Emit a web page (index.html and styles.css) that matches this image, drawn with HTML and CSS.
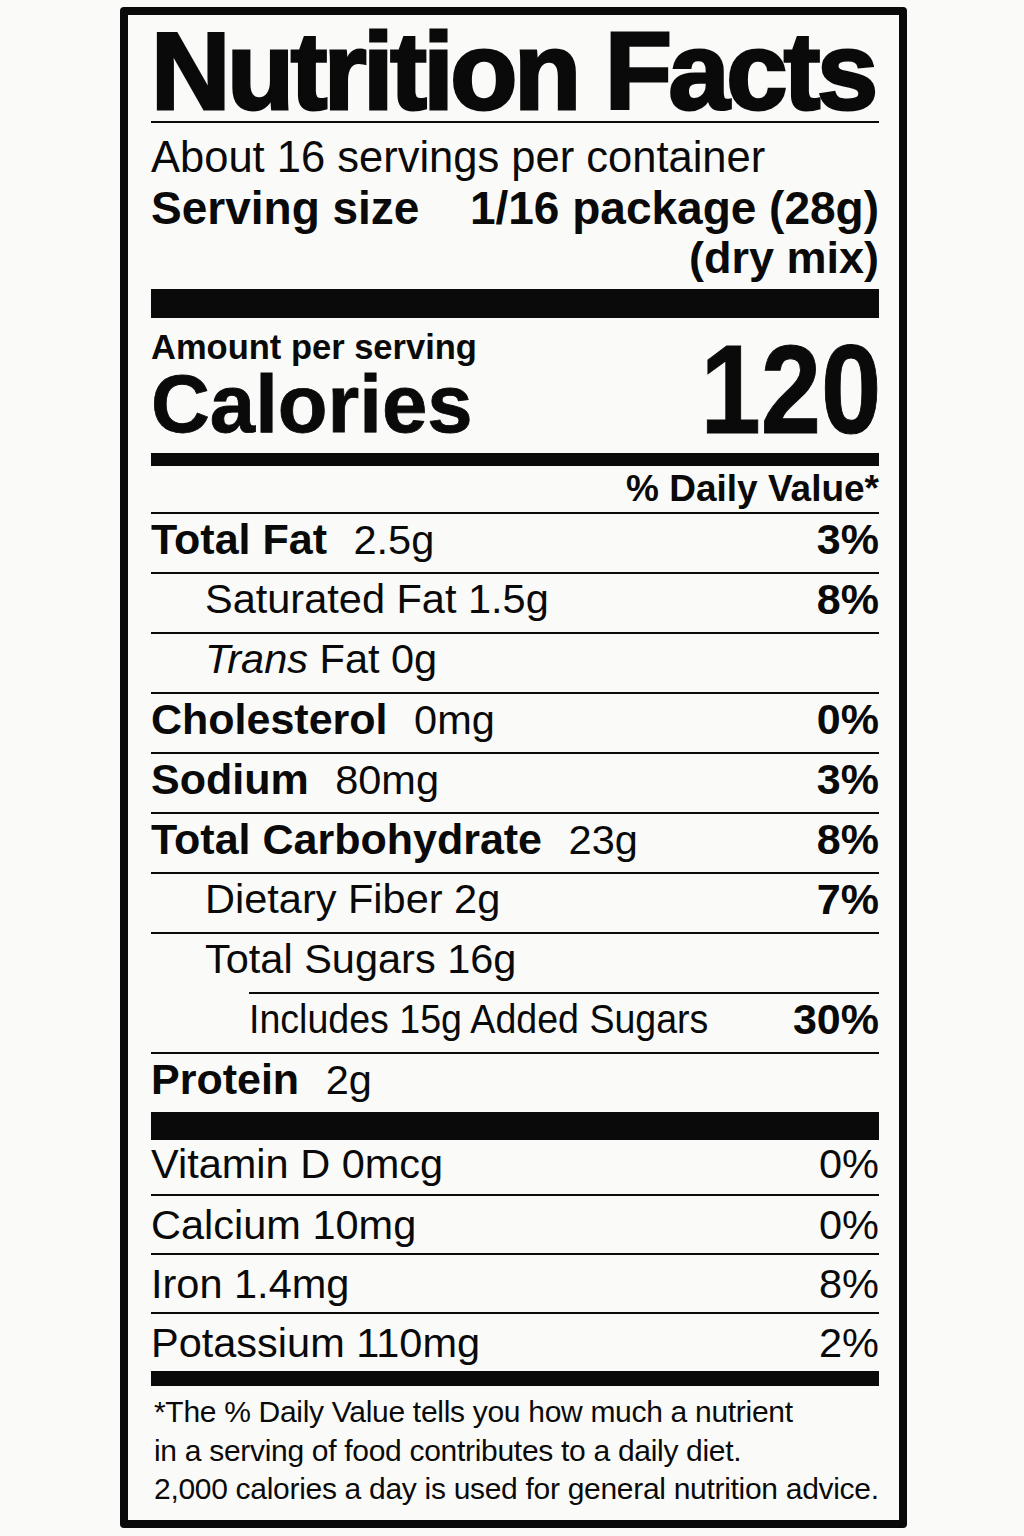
FILE: index.html
```html
<!DOCTYPE html>
<html lang="en">
<head>
<meta charset="utf-8">
<title>Nutrition Facts</title>
<link rel="stylesheet" href="styles.css">
</head>
<body>
<div class="label">
  <h1 class="title">Nutrition Facts</h1>

  <div class="servings">
    <div class="per-container">About 16 servings per container</div>
    <div class="size-row">
      <span>Serving size</span>
      <span>1/16 package (28g)</span>
    </div>
    <div class="size-note">(dry mix)</div>
  </div>

  <div class="calories">
    <div class="cal-left">
      <div class="amount">Amount per serving</div>
      <div class="cal-word">Calories</div>
    </div>
    <div class="cal-num"><span>120</span></div>
  </div>

  <div class="dv-head">% Daily Value*</div>

  <div class="rows">
    <div class="row"><span><b>Total Fat</b> <span class="amt">2.5g</span></span><b>3%</b></div>
    <div class="row indent"><span>Saturated Fat 1.5g</span><b>8%</b></div>
    <div class="row indent"><span><i>Trans</i> Fat 0g</span></div>
    <div class="row"><span><b>Cholesterol</b> <span class="amt">0mg</span></span><b>0%</b></div>
    <div class="row"><span><b>Sodium</b> <span class="amt">80mg</span></span><b>3%</b></div>
    <div class="row"><span><b>Total Carbohydrate</b> <span class="amt">23g</span></span><b>8%</b></div>
    <div class="row indent"><span>Dietary Fiber 2g</span><b>7%</b></div>
    <div class="row indent"><span>Total Sugars 16g</span></div>
    <div class="row added"><span class="narrow">Includes 15g Added Sugars</span><b>30%</b></div>
    <div class="row"><span><b>Protein</b> <span class="amt">2g</span></span></div>
  </div>

  <div class="vitamins">
    <div class="vrow first"><span>Vitamin D 0mcg</span><span>0%</span></div>
    <div class="vrow"><span>Calcium 10mg</span><span>0%</span></div>
    <div class="vrow"><span>Iron 1.4mg</span><span>8%</span></div>
    <div class="vrow"><span>Potassium 110mg</span><span>2%</span></div>
  </div>

  <p class="footnote">*The % Daily Value tells you how much a nutrient<br>in a serving of food contributes to a daily diet.<br>2,000 calories a day is used for general nutrition advice.</p>
</div>
</body>
</html>
```

FILE: styles.css
```css
html, body {
  margin: 0;
  padding: 0;
  background: #fafaf8;
}

body {
  font-family: "Liberation Sans", Arial, Helvetica, sans-serif;
  color: #0a0a0a;
}

.label {
  box-sizing: border-box;
  width: 787px;
  margin: 7px 0 0 120px;
  border: 8px solid #0a0a0a;
  border-radius: 4px;
  padding: 0 20px 0 23px;
  background: #fafaf8;
}

.title {
  margin: 0;
  padding-top: 6px;
  font-size: 110px;
  line-height: 100px;
  font-weight: 700;
  letter-spacing: -3.5px;
  -webkit-text-stroke: 3px #0a0a0a;
  white-space: nowrap;
  border-bottom: 2px solid #0a0a0a;
}

.servings {
  padding: 9px 0 7px;
  border-bottom: 29px solid #0a0a0a;
}

.per-container {
  font-size: 43.5px;
  line-height: 50px;
  white-space: nowrap;
}

.size-row {
  display: flex;
  justify-content: space-between;
  margin-top: 1px;
  font-size: 46px;
  line-height: 50px;
  font-weight: 700;
  white-space: nowrap;
}

.size-note {
  text-align: right;
  font-size: 45px;
  line-height: 49px;
  font-weight: 700;
}

.calories {
  display: flex;
  justify-content: space-between;
  align-items: flex-end;
  padding: 10px 0 13px;
  border-bottom: 13px solid #0a0a0a;
}

.amount {
  font-size: 34.5px;
  line-height: 38px;
  padding-bottom: 2px;
  font-weight: 700;
  white-space: nowrap;
}

.cal-word {
  font-size: 81.5px;
  line-height: 72px;
  font-weight: 700;
  -webkit-text-stroke: 0.8px #0a0a0a;
}

.cal-num {
  font-size: 126px;
  line-height: 100px;
  font-weight: 700;
}

.cal-num span {
  display: inline-block;
  transform: scaleX(0.86);
  transform-origin: right center;
  -webkit-text-stroke: 1px #0a0a0a;
  margin-right: -2px;
}

.dv-head {
  height: 46px;
  font-size: 37px;
  line-height: 46px;
  font-weight: 700;
  text-align: right;
}

.row {
  display: flex;
  justify-content: space-between;
  height: 50px;
  overflow: visible;
  border-top: 2px solid #0a0a0a;
  font-size: 41.5px;
  line-height: 50px;
  padding-bottom: 8px;
  white-space: nowrap;
}

.row b {
  font-size: 43px;
  font-weight: 700;
}

.row .amt {
  margin-left: 15px;
}

.row.indent {
  padding-left: 54px;
}

.row.added {
  margin-left: 98px;
}

.narrow {
  display: inline-block;
  transform: scaleX(0.905);
  transform-origin: left center;
}

.vitamins {
  border-top: 28px solid #0a0a0a;
  border-bottom: 15px solid #0a0a0a;
}

.vrow {
  display: flex;
  justify-content: space-between;
  border-top: 2px solid #0a0a0a;
  font-size: 41.5px;
  line-height: 57px;
  white-space: nowrap;
}

.vrow.first {
  border-top: 0;
  line-height: 48px;
  padding-bottom: 6px;
}

.footnote {
  margin: 0;
  padding: 7px 0 11px 3px;
  font-size: 30px;
  line-height: 38.5px;
  letter-spacing: -0.3px;
  white-space: nowrap;
}
```
